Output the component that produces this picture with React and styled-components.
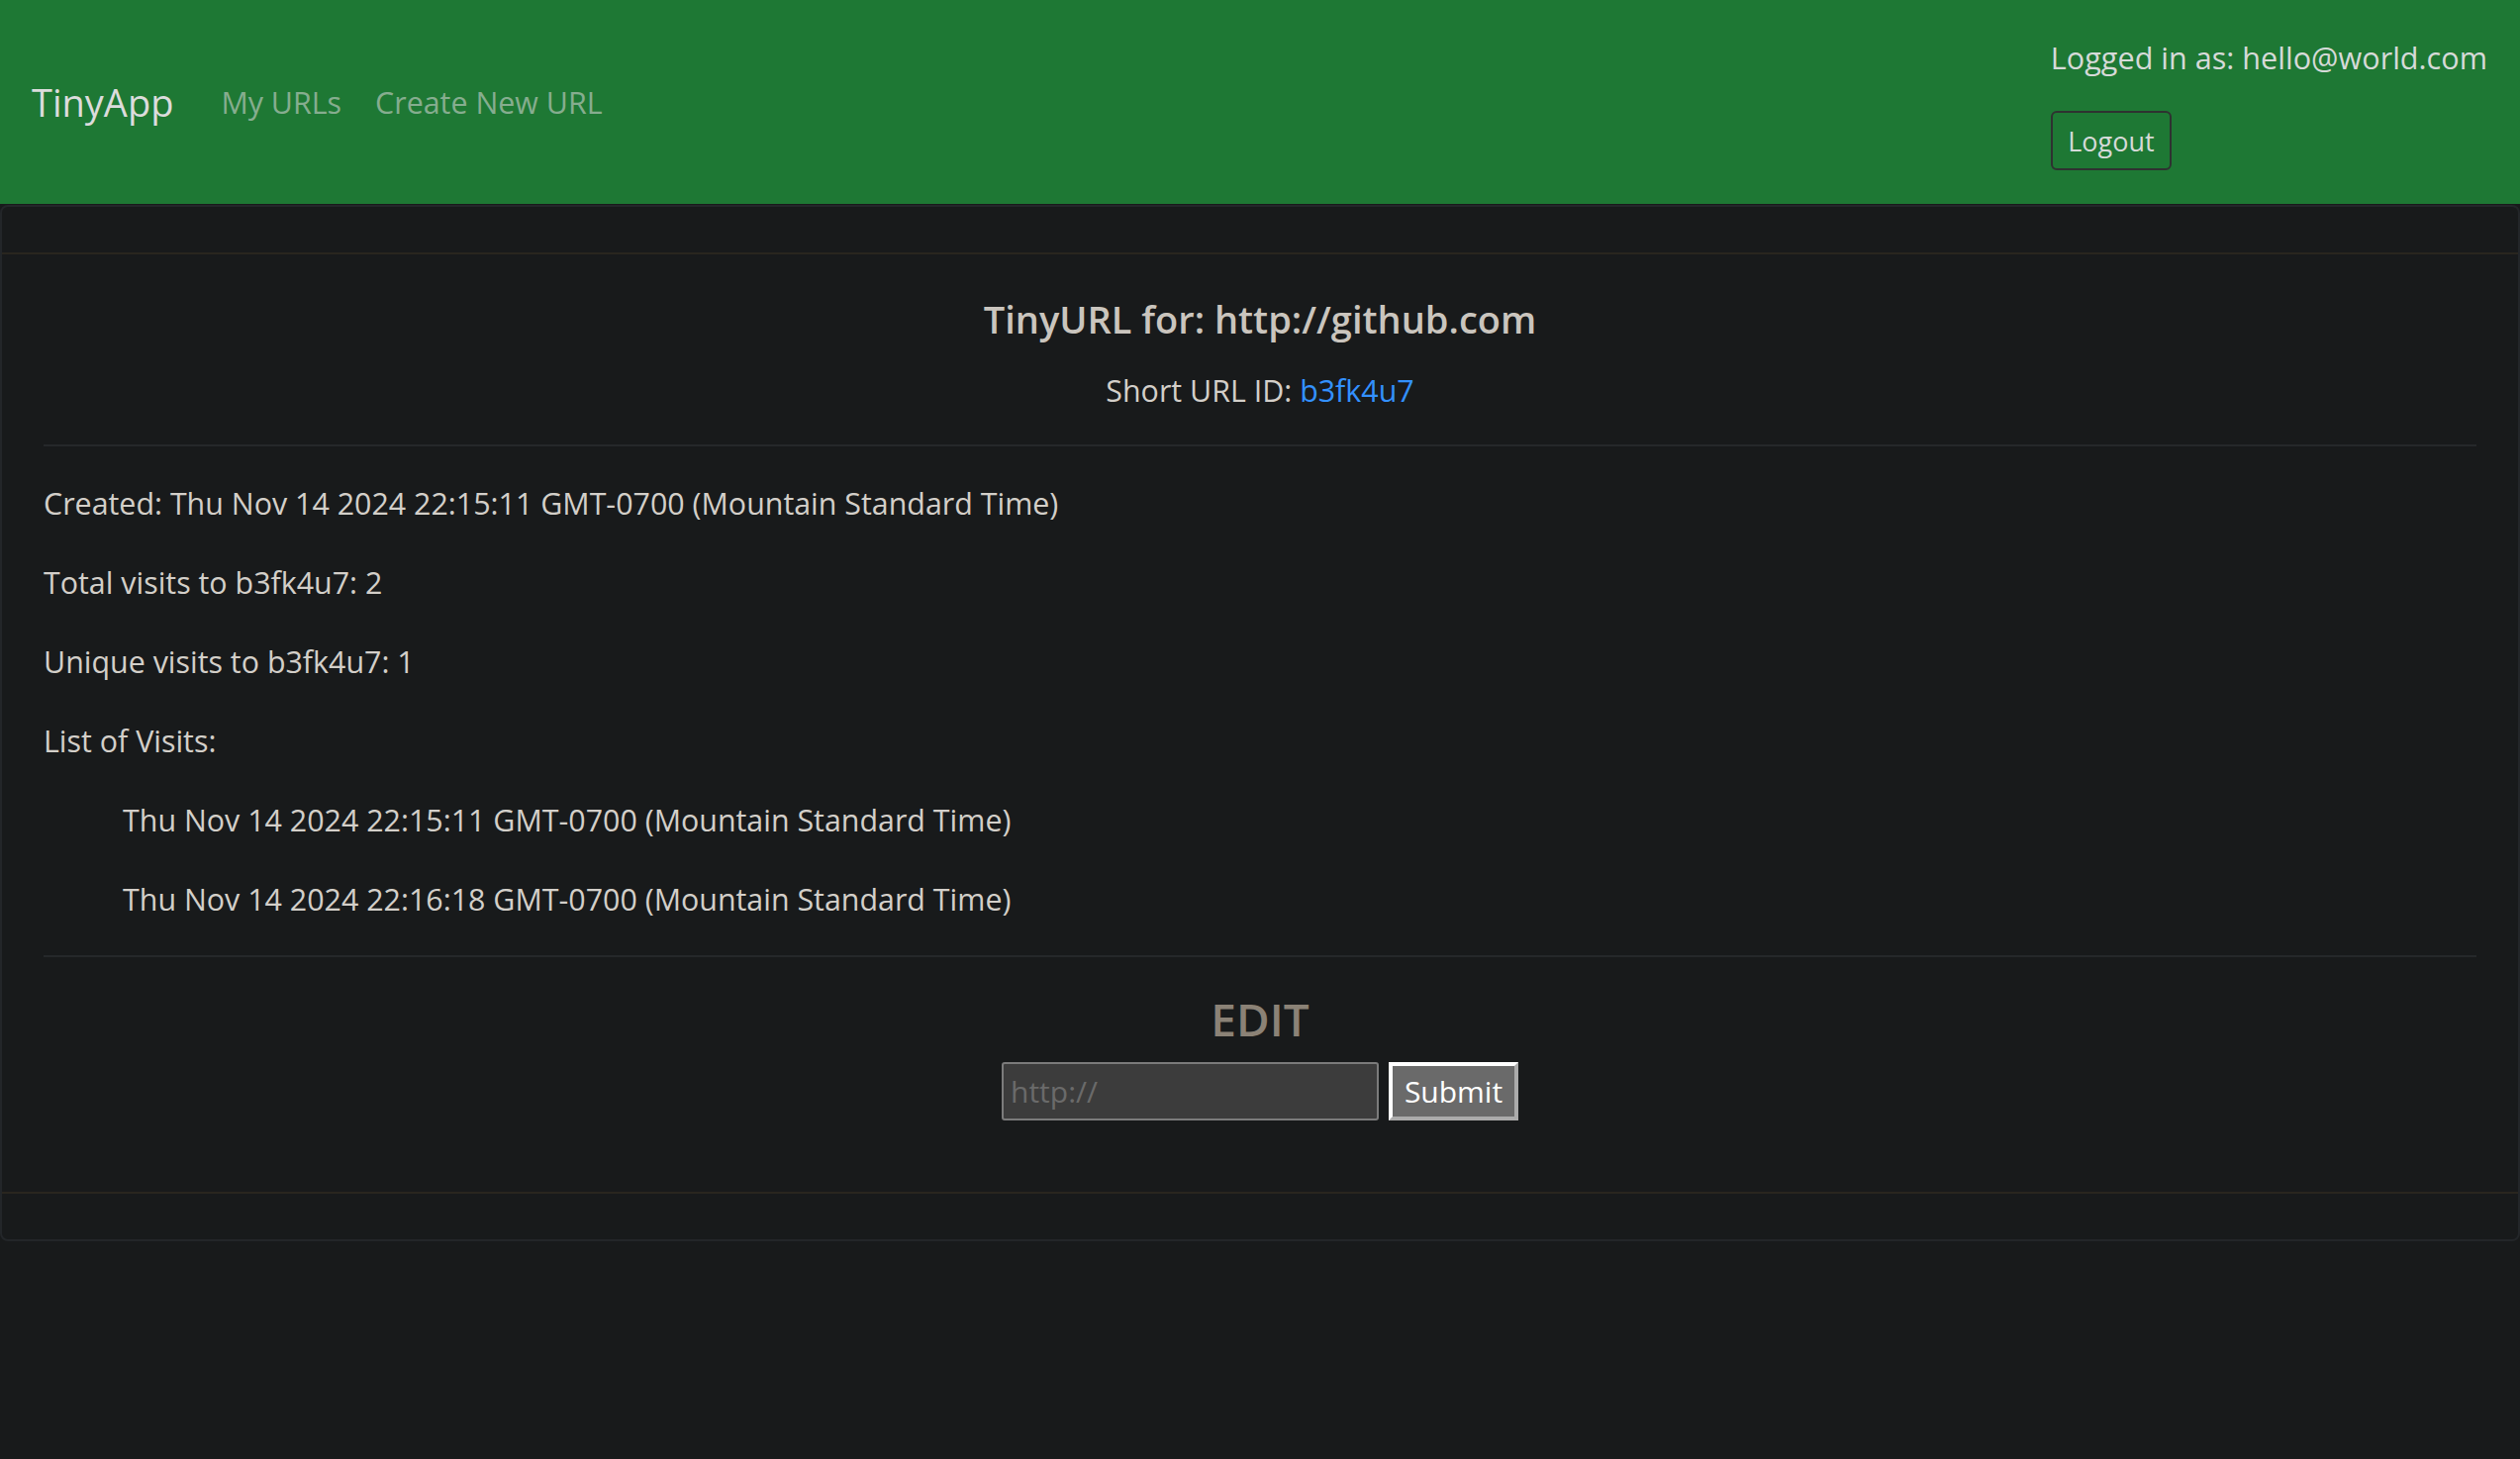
import styled, { createGlobalStyle } from "styled-components";

const GlobalStyle = createGlobalStyle`
	html, body {
		margin: 0;
		padding: 0;
		background: #181a1b;
	}
	body {
		font-family: "Open Sans", "Noto Sans", sans-serif;
		color: #d3cfc9;
	}
	* {
		box-sizing: border-box;
	}
`;

const Navbar = styled.nav`
	display: flex;
	align-items: center;
	justify-content: space-between;
	height: 206px;
	padding: 0 33px 0 32px;
	background: #1e7834;
`;

const NavLeft = styled.div`
	display: flex;
	align-items: center;
	gap: 48px;
`;

const Brand = styled.a`
	font-size: 38px;
	color: #dcdcdc;
	text-decoration: none;
`;

const NavLinks = styled.div`
	display: flex;
	gap: 34px;
`;

const NavLink = styled.a`
	font-size: 30.4px;
	color: #86ad8f;
	text-decoration: none;
`;

const UserBlock = styled.div`
	display: flex;
	flex-direction: column;
	align-items: flex-start;
	gap: 36px;
	margin-top: 6px;
`;

const LoggedIn = styled.span`
	font-size: 30.6px;
	line-height: 36px;
	color: #d6dad8;
`;

const LogoutButton = styled.button`
	font-family: inherit;
	font-size: 27px;
	color: #d6dad8;
	background: transparent;
	border: 2px solid #2e3230;
	border-radius: 6px;
	padding: 0;
	width: 122px;
	height: 60px;
`;

const Card = styled.section`
	margin-top: 1px;
	border: 2px solid #232629;
	border-radius: 8px;
`;

const CardHeader = styled.div`
	height: 48px;
	border-bottom: 2px solid #29261f;
`;

const CardFooter = styled.div`
	height: 48px;
	border-top: 2px solid #29261f;
`;

const CardBody = styled.div`
	padding: 42px 42px 72px;
`;

const Title = styled.h4`
	margin: 0;
	text-align: center;
	font-size: 38px;
	font-weight: 600;
	line-height: 46px;
	color: #cac5be;
`;

const ShortId = styled.p`
	margin: 30px 0 0;
	text-align: center;
	font-size: 30.4px;
	line-height: 39px;
`;

const IdLink = styled.a`
	color: #3391ff;
	text-decoration: none;
`;

const Rule = styled.hr`
	margin: ${({ $top }) => $top}px 0 0;
	border: 0;
	border-top: 2px solid #25282a;
`;

const Stats = styled.div`
	display: flex;
	flex-direction: column;
	gap: 40px;
	margin: 38px 0 36px;
`;

const Stat = styled.p`
	margin: 0;
	font-size: 30.4px;
	line-height: 40px;
	padding-left: ${({ $indent }) => ($indent ? "80px" : "0")};
`;

const EditTitle = styled.h3`
	margin: 32px 0 0;
	text-align: center;
	font-size: 46px;
	font-weight: 600;
	line-height: 60px;
	color: #8b8276;
`;

const EditForm = styled.form`
	display: flex;
	justify-content: center;
	gap: 10px;
	margin-top: 14px;
`;

const UrlInput = styled.input`
	width: 381px;
	height: 59px;
	padding: 0 7px;
	font-family: inherit;
	font-size: 30px;
	color: #d3cfc9;
	background: #3c3c3c;
	border: 2px solid #7b7b7b;
	border-radius: 3px;
	outline: none;
	&::placeholder {
		color: #6a6a6a;
	}
`;

const SubmitButton = styled.button`
	width: 131px;
	height: 59px;
	font-family: inherit;
	font-size: 30px;
	color: #ffffff;
	background: #6a6a6a;
	border: 4px solid;
	border-color: #ffffff #ababab #ababab #ffffff;
	padding: 0;
`;

const visits = [
	"Thu Nov 14 2024 22:15:11 GMT-0700 (Mountain Standard Time)",
	"Thu Nov 14 2024 22:16:18 GMT-0700 (Mountain Standard Time)",
];

const App = () => {
	return (
		<>
			<GlobalStyle />
			<Navbar>
				<NavLeft>
					<Brand href="#">TinyApp</Brand>
					<NavLinks>
						<NavLink href="#">My URLs</NavLink>
						<NavLink href="#">Create New URL</NavLink>
					</NavLinks>
				</NavLeft>
				<UserBlock>
					<LoggedIn>Logged in as: hello@world.com</LoggedIn>
					<LogoutButton type="button">Logout</LogoutButton>
				</UserBlock>
			</Navbar>

			<Card>
				<CardHeader />
				<CardBody>
					<Title>TinyURL for: http://github.com</Title>
					<ShortId>
						Short URL ID: <IdLink href="#">b3fk4u7</IdLink>
					</ShortId>
					<Rule $top={35} />
					<Stats>
						<Stat>Created: Thu Nov 14 2024 22:15:11 GMT-0700 (Mountain Standard Time)</Stat>
						<Stat>Total visits to b3fk4u7: 2</Stat>
						<Stat>Unique visits to b3fk4u7: 1</Stat>
						<Stat>List of Visits:</Stat>
						{visits.map((v) => (
							<Stat key={v} $indent>
								{v}
							</Stat>
						))}
					</Stats>
					<Rule $top={0} />
					<EditTitle>EDIT</EditTitle>
					<EditForm onSubmit={(e) => e.preventDefault()}>
						<UrlInput type="text" placeholder="http://" />
						<SubmitButton type="submit">Submit</SubmitButton>
					</EditForm>
				</CardBody>
				<CardFooter />
			</Card>
		</>
	);
};

export default App;
